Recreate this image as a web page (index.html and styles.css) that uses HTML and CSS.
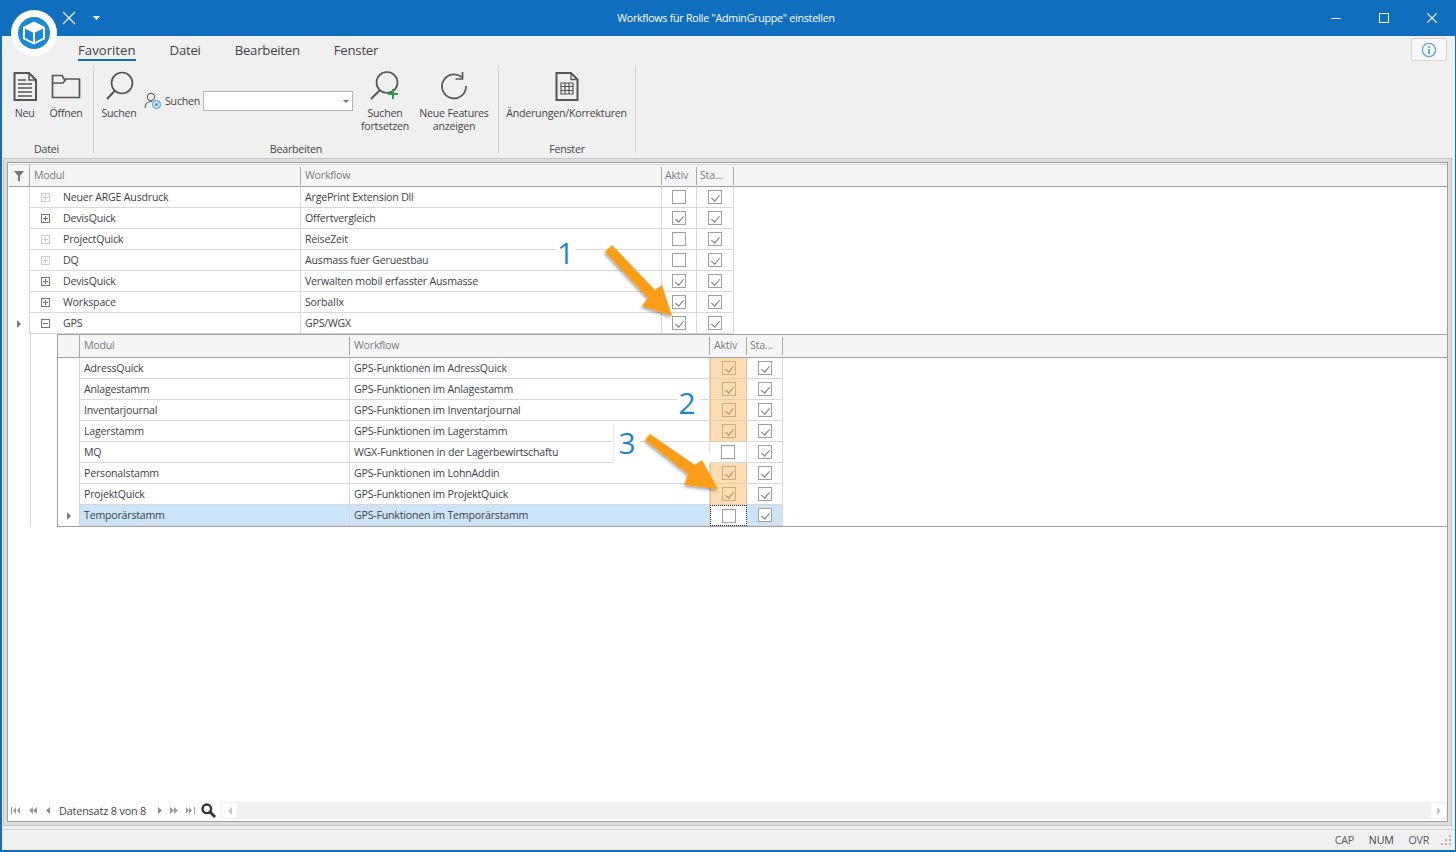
FILE: index.html
```html
<!DOCTYPE html>
<html lang="de">
<head>
    <meta charset="UTF-8">
    <title>Workflows für Rolle "AdminGruppe" einstellen</title>
    <link rel="stylesheet" href="styles.css">
</head>
<body>
<div class="window">
    <div class="titlebar">
        <div class="quick">
            <svg width="14" height="14" viewBox="0 0 14 14"><path d="M1 1L13 13M13 1L1 13" stroke="#fff" stroke-width="1.1" fill="none"/></svg>
            <svg class="quick-caret" width="7" height="4" viewBox="0 0 7 4"><path d="M0 0H7L3.5 4Z" fill="#fff"/></svg>
        </div>
        <div class="title">Workflows für Rolle "AdminGruppe" einstellen</div>
        <div class="win-buttons">
            <svg width="10" height="10" viewBox="0 0 10 10"><path d="M0 5.5H10" stroke="#fff" stroke-width="1"/></svg>
            <svg width="10" height="10" viewBox="0 0 10 10"><rect x=".5" y=".5" width="9" height="9" fill="none" stroke="#fff"/></svg>
            <svg width="10" height="10" viewBox="0 0 10 10"><path d="M0 0L10 10M10 0L0 10" stroke="#fff" stroke-width="1.1"/></svg>
        </div>
    </div>

    <div class="logo">
        <svg width="34" height="34" viewBox="0 0 34 34">
            <circle cx="17" cy="17" r="16" fill="#1c87d4"/>
            <path d="M17 5.5L28 11V23L17 28.5L6 23V11Z" fill="#fff"/>
            <path d="M8 12.8L16 16.6V26L8 22Z" fill="#1c87d4"/>
            <path d="M26 12.8L18 16.6V26L26 22Z" fill="#1c87d4"/>
        </svg>
    </div>

    <div class="tabs">
        <span class="tab active">Favoriten</span>
        <span class="tab">Datei</span>
        <span class="tab">Bearbeiten</span>
        <span class="tab">Fenster</span>
        <div class="info-btn">
            <svg width="16" height="16" viewBox="0 0 16 16"><circle cx="8" cy="8" r="6.6" fill="none" stroke="#5aa9e0" stroke-width="1.3"/><path d="M8 4.2V5.8M8 7V12" stroke="#2f8fd6" stroke-width="1.5"/></svg>
        </div>
    </div>

    <div class="ribbon">
        <div class="group group-datei">
            <div class="group-items">
                <div class="rb-btn btn-neu">
                    <svg width="26" height="32" viewBox="0 0 26 32"><path d="M2.5 4H17L24 11V31H2.5Z" fill="none" stroke="#555" stroke-width="2"/><path d="M17 4V11H24" fill="none" stroke="#555" stroke-width="1.5"/><path d="M6 11H14M6 15H20M6 19H20M6 23H20M6 27H20" stroke="#555" stroke-width="1.5"/></svg>
                    <span>Neu</span>
                </div>
                <div class="rb-btn btn-open">
                    <svg width="30" height="32" viewBox="0 0 30 32"><path d="M1.5 7.5V28.5H28.5V10H13L11 6.5H1.5Z M1.5 14H12L15 10" fill="none" stroke="#555" stroke-width="1.7"/></svg>
                    <span>Öffnen</span>
                </div>
            </div>
            <div class="group-label">Datei</div>
        </div>

        <div class="group group-edit">
            <div class="group-items">
                <div class="rb-btn btn-search">
                    <svg width="32" height="32" viewBox="0 0 32 32"><circle cx="19" cy="14" r="10.5" fill="none" stroke="#555" stroke-width="1.7"/><path d="M11.5 22L4 30" stroke="#555" stroke-width="2"/></svg>
                    <span>Suchen</span>
                </div>
                <div class="search-field">
                    <svg width="18" height="18" viewBox="0 0 18 18"><circle cx="7" cy="5" r="3.6" fill="none" stroke="#666" stroke-width="1.1"/><path d="M1 16C1 11 4 9.5 8 9.5" fill="none" stroke="#666" stroke-width="1.1"/><circle cx="12.5" cy="12.5" r="4" fill="#cfe6f7" stroke="#3d97d8"/><circle cx="12.5" cy="12.5" r="1.5" fill="#2f8fd6"/></svg>
                    <span class="search-label">Suchen</span>
                    <div class="combo"><i class="combo-caret"></i></div>
                </div>
                <div class="rb-btn btn-next">
                    <svg width="32" height="32" viewBox="0 0 32 32"><circle cx="18" cy="13.5" r="10.5" fill="none" stroke="#555" stroke-width="1.7"/><path d="M10.5 21.5L2 30" stroke="#555" stroke-width="2"/><path d="M24 20V30M19 25H29" stroke="#2f9e4f" stroke-width="2"/></svg>
                    <span>Suchen<br>fortsetzen</span>
                </div>
                <div class="rb-btn btn-new">
                    <svg width="28" height="32" viewBox="0 0 28 32"><path d="M21.5 8A12 12 0 1 0 26 17" fill="none" stroke="#555" stroke-width="1.7"/><path d="M22.5 3V10H15.5" fill="none" stroke="#555" stroke-width="1.7"/></svg>
                    <span>Neue Features<br>anzeigen</span>
                </div>
            </div>
            <div class="group-label">Bearbeiten</div>
        </div>

        <div class="group group-window">
            <div class="group-items">
                <div class="rb-btn btn-changes">
                    <svg width="24" height="32" viewBox="0 0 24 32"><path d="M1.5 4H16L22.5 10.5V31H1.5Z" fill="none" stroke="#555" stroke-width="2"/><path d="M16 4V10.5H22.5" fill="none" stroke="#555" stroke-width="1.3"/><path d="M6 14H18V25H6Z M6 17.5H18M6 21.5H18M10 14V25M14 14V25" fill="none" stroke="#555" stroke-width="1.2"/></svg>
                    <span>Änderungen/Korrekturen</span>
                </div>
            </div>
            <div class="group-label">Fenster</div>
        </div>
    </div>

    <div class="frame">
        <div class="frame-inner">
            <div class="grid">
                <div class="row head main-cols">
                    <div class="cell ind"><svg width="10" height="10" viewBox="0 0 10 10"><path d="M0 0H10L6 5V10H4V5Z" fill="#777"/></svg></div>
                    <div class="cell">Modul</div><div class="cell">Workflow</div><div class="cell narrow">Aktiv</div><div class="cell narrow">Sta...</div>
                </div>
                <div class="row main-cols">
                    <div class="ind"></div><div class="cell modul"><i class="exp off"></i>Neuer ARGE Ausdruck</div><div class="cell">ArgePrint Extension Dll</div><div class="cell box"><i class="check"></i></div><div class="cell box"><i class="check on"></i></div>
                </div>
                <div class="row main-cols">
                    <div class="ind"></div><div class="cell modul"><i class="exp"></i>DevisQuick</div><div class="cell">Offertvergleich</div><div class="cell box"><i class="check on"></i></div><div class="cell box"><i class="check on"></i></div>
                </div>
                <div class="row main-cols">
                    <div class="ind"></div><div class="cell modul"><i class="exp off"></i>ProjectQuick</div><div class="cell">ReiseZeit</div><div class="cell box"><i class="check"></i></div><div class="cell box"><i class="check on"></i></div>
                </div>
                <div class="row main-cols">
                    <div class="ind"></div><div class="cell modul"><i class="exp off"></i>DQ</div><div class="cell">Ausmass fuer Geruestbau</div><div class="cell box"><i class="check"></i></div><div class="cell box"><i class="check on"></i></div>
                </div>
                <div class="row main-cols">
                    <div class="ind"></div><div class="cell modul"><i class="exp"></i>DevisQuick</div><div class="cell">Verwalten mobil erfasster Ausmasse</div><div class="cell box"><i class="check on"></i></div><div class="cell box"><i class="check on"></i></div>
                </div>
                <div class="row main-cols">
                    <div class="ind"></div><div class="cell modul"><i class="exp"></i>Workspace</div><div class="cell">SorbaIIx</div><div class="cell box"><i class="check on"></i></div><div class="cell box"><i class="check on"></i></div>
                </div>
                <div class="row main-cols">
                    <div class="ind"><i class="cur"></i></div><div class="cell modul"><i class="exp open"></i>GPS</div><div class="cell">GPS/WGX</div><div class="cell box"><i class="check on"></i></div><div class="cell box"><i class="check on"></i></div>
                </div>

                <div class="detail-wrap">
                    <div class="detail">
                        <div class="row head sub-cols">
                            <div class="cell ind"></div><div class="cell">Modul</div><div class="cell">Workflow</div><div class="cell">Aktiv</div><div class="cell narrow">Sta...</div>
                        </div>
                        <div class="row sub-cols">
                            <div class="ind"></div><div class="cell">AdressQuick</div><div class="cell">GPS-Funktionen im AdressQuick</div><div class="cell box hl"><i class="check on"></i></div><div class="cell box"><i class="check on"></i></div>
                        </div>
                        <div class="row sub-cols">
                            <div class="ind"></div><div class="cell">Anlagestamm</div><div class="cell">GPS-Funktionen im Anlagestamm</div><div class="cell box hl"><i class="check on"></i></div><div class="cell box"><i class="check on"></i></div>
                        </div>
                        <div class="row sub-cols">
                            <div class="ind"></div><div class="cell">Inventarjournal</div><div class="cell">GPS-Funktionen im Inventarjournal</div><div class="cell box hl"><i class="check on"></i></div><div class="cell box"><i class="check on"></i></div>
                        </div>
                        <div class="row sub-cols">
                            <div class="ind"></div><div class="cell">Lagerstamm</div><div class="cell">GPS-Funktionen im Lagerstamm</div><div class="cell box hl"><i class="check on"></i></div><div class="cell box"><i class="check on"></i></div>
                        </div>
                        <div class="row sub-cols">
                            <div class="ind"></div><div class="cell">MQ</div><div class="cell">WGX-Funktionen in der Lagerbewirtschaftu</div><div class="cell box"><i class="check"></i></div><div class="cell box"><i class="check on"></i></div>
                        </div>
                        <div class="row sub-cols">
                            <div class="ind"></div><div class="cell">Personalstamm</div><div class="cell">GPS-Funktionen im LohnAddin</div><div class="cell box hl"><i class="check on"></i></div><div class="cell box"><i class="check on"></i></div>
                        </div>
                        <div class="row sub-cols">
                            <div class="ind"></div><div class="cell">ProjektQuick</div><div class="cell">GPS-Funktionen im ProjektQuick</div><div class="cell box hl"><i class="check on"></i></div><div class="cell box"><i class="check on"></i></div>
                        </div>
                        <div class="row sub-cols selected">
                            <div class="ind"><i class="cur"></i></div><div class="cell">Temporärstamm</div><div class="cell">GPS-Funktionen im Temporärstamm</div><div class="cell box focus"><i class="check"></i></div><div class="cell box"><i class="check on"></i></div>
                        </div>
                    </div>
                </div>
            </div>

            <div class="pager">
                <div class="nav-btns">
                    <svg width="9" height="7" viewBox="0 0 9 7"><path d="M0 0H1V7H0ZM5 0V7L2 3.5ZM9 0V7L6 3.5Z" fill="#9a9a9a"/></svg>
                    <svg width="8" height="7" viewBox="0 0 8 7"><path d="M4 0V7L0 3.5ZM8 0V7L4 3.5Z" fill="#9a9a9a"/></svg>
                    <svg width="4" height="7" viewBox="0 0 4 7"><path d="M4 0V7L0 3.5Z" fill="#8a8a8a"/></svg>
                </div>
                <span class="record">Datensatz 8 von 8</span>
                <div class="nav-btns nav-right">
                    <svg width="4" height="7" viewBox="0 0 4 7"><path d="M0 0V7L4 3.5Z" fill="#8a8a8a"/></svg>
                    <svg width="8" height="7" viewBox="0 0 8 7"><path d="M0 0V7L4 3.5ZM4 0V7L8 3.5Z" fill="#9a9a9a"/></svg>
                    <svg width="9" height="7" viewBox="0 0 9 7"><path d="M0 0V7L3 3.5ZM3 0V7L6 3.5ZM8 0H9V7H8Z" fill="#9a9a9a"/></svg>
                </div>
                <svg class="pager-search" width="15" height="15" viewBox="0 0 15 15"><circle cx="5.8" cy="5.8" r="4.3" fill="none" stroke="#333" stroke-width="2.4"/><path d="M9 9L14 14" stroke="#333" stroke-width="2.8"/></svg>
                <div class="hscroll">
                    <div class="sb-btn"><i class="sb-left"></i></div>
                    <div class="sb-btn"><i class="sb-right"></i></div>
                </div>
            </div>
        </div>
    </div>

    <div class="statusbar">
        <span class="st-cap">CAP</span><span class="st-num">NUM</span><span class="st-ovr">OVR</span>
        <svg width="10" height="10" viewBox="0 0 10 10"><path d="M8 0h2v2H8zM4 4h2v2H4zM8 4h2v2H8zM0 8h2v2H0zM4 8h2v2H4zM8 8h2v2H8z" fill="#b4b4b4"/></svg>
    </div>

    <div class="mark mark-1">1</div>
    <div class="mark mark-2">2</div>
    <div class="mark mark-3">3</div>
    <svg class="arrows" width="1456" height="852" viewBox="0 0 1456 852">
        <defs><filter id="sh" x="-20%" y="-20%" width="140%" height="140%"><feDropShadow dx="-1" dy="2" stdDeviation="1.6" flood-color="#000" flood-opacity=".35"/></filter></defs>
        <path d="M605 252L612 245L655 290L662 285L672 316L642 306L648 298Z" fill="#fb9d17" filter="url(#sh)"/>
        <path d="M645 440L650 434L695 465L702 460L718 489L685 485L688 474Z" fill="#fb9d17" filter="url(#sh)"/>
    </svg>
</div>
</body>
</html>
```

FILE: styles.css
```css
* {
    box-sizing: border-box;
}

body {
    margin: 0;
    font-family: "Open Sans", "Liberation Sans", sans-serif;
    font-size: 10.6px;
    letter-spacing: -0.2px;
    color: #3c3f4a;
    background: #f0f0f0;
}

.window {
    position: relative;
    display: flex;
    flex-direction: column;
    height: 852px;
    overflow: hidden;
    border-left: 2px solid #106ebe;
    border-right: 1px solid #106ebe;
    border-bottom: 2px solid #106ebe;
}

/* title bar */
.titlebar {
    display: flex;
    align-items: center;
    flex: none;
    height: 36px;
    margin: 0 -1px 0 -2px;
    background: #106ebe;
    color: #fff;
}

.quick {
    display: flex;
    align-items: center;
    width: 440px;
    padding-left: 62px;
}

.quick-caret {
    margin-left: 17px;
}

.title {
    width: 572px;
    text-align: center;
    letter-spacing: -0.22px;
}

.win-buttons {
    display: flex;
    align-items: center;
    gap: 38px;
    margin-left: auto;
    padding-right: 19px;
}

.logo {
    position: absolute;
    left: 9px;
    top: 10px;
    width: 46px;
    height: 46px;
    display: flex;
    align-items: center;
    justify-content: center;
    border-radius: 50%;
    background: #fff;
}

/* tabs */
.tabs {
    display: flex;
    align-items: flex-start;
    flex: none;
    height: 28px;
    padding-left: 76px;
    gap: 34px;
}

.tab {
    height: 25px;
    padding-top: 4px;
    font-size: 13.2px;
    letter-spacing: -0.25px;
    line-height: 20px;
    color: #444;
}

.tab.active {
    letter-spacing: 0;
    border-bottom: 2px solid #106ebe;
}

.info-btn {
    display: flex;
    align-items: center;
    justify-content: center;
    width: 36px;
    height: 23px;
    margin: 2px 8px 0 auto;
    background: #f8f8f8;
    border: 1px solid #d4d4d4;
    border-radius: 2px;
}

/* ribbon */
.ribbon {
    display: flex;
    flex: none;
    height: 91px;
    padding-top: 2px;
}

.group {
    display: flex;
    flex-direction: column;
    height: 87px;
    border-right: 1px solid #d0d0d0;
}

.group-datei {
    width: 92px;
    padding: 0 6px 0 4px;
}

.group-edit {
    width: 405px;
}

.group-window {
    width: 137px;
}

.group-items {
    display: flex;
    flex: 1;
}

.group-label {
    height: 14px;
    margin-bottom: -3px;
    text-align: center;
    line-height: 14px;
    color: #444;
}

.rb-btn {
    display: flex;
    flex-direction: column;
    align-items: center;
    text-align: center;
    line-height: 13px;
    color: #444;
    white-space: nowrap;
}

.rb-btn svg {
    height: 32px;
    margin-top: 3px;
    margin-bottom: 6px;
}

.btn-neu {
    width: 39px;
}

.btn-open {
    width: 44px;
    margin-left: 2px;
}

.btn-search {
    width: 50px;
}

.btn-next {
    width: 54px;
    margin-left: 1px;
}

.btn-new {
    width: 74px;
    margin-left: 5px;
}

.btn-changes {
    width: 135px;
}

.search-field {
    display: flex;
    align-items: center;
    align-self: flex-start;
    width: 213px;
    margin-top: 25px;
    height: 20px;
    color: #444;
}

.search-label {
    margin: 0 3px 0 3px;
}

.combo {
    position: relative;
    width: 150px;
    height: 20px;
    background: #fff;
    border: 1px solid #b4b4b4;
}

.combo-caret {
    position: absolute;
    right: 3px;
    top: 8px;
    border-top: 3px solid #777;
    border-left: 3px solid transparent;
    border-right: 3px solid transparent;
}

/* grid frame */
.frame {
    flex: 1;
    margin: 3px 3px 3px 1px;
    padding: 3px;
    background: #dedede;
    border: 1px solid #c4c4c4;
}

.frame-inner {
    display: flex;
    flex-direction: column;
    height: 100%;
    padding: 1px 0 1px 1px;
    background: #fff;
    border: 1px solid #a0a0a0;
}

.grid {
    flex: 1;
}

.row {
    display: grid;
    height: 21px;
}

.main-cols {
    grid-template-columns: 21px 271px 361px 35px 37px;
}

.sub-cols {
    grid-template-columns: 22px 270px 360px 37px 36px;
}

.cell {
    padding-left: 4px;
    line-height: 20px;
    white-space: nowrap;
    overflow: hidden;
    border-right: 1px solid #d8d8d8;
    border-bottom: 1px solid #d8d8d8;
}

.ind {
    display: flex;
    align-items: center;
    justify-content: center;
    border-right: 1px solid #d8d8d8;
}

.head {
    height: 23px;
    grid-template-rows: 22px;
    background: #f5f5f5;
    border-bottom: 1px solid #a0a0a0;
    color: #777b85;
    border-top: 1px solid #d8d8d8;
}

.head .cell {
    border: 0;
    border-right: 1px solid #a8a8a8;
    margin: 2px 0;
    line-height: 17px;
    padding-left: 4px;
}

.head .cell.narrow {
    padding-left: 3px;
}

.head .cell:first-child {
    margin: 0;
    padding: 0;
    display: flex;
    align-items: center;
    justify-content: center;
}

.modul {
    display: flex;
    align-items: center;
    padding-left: 11px;
}

.exp {
    position: relative;
    flex: none;
    width: 9px;
    height: 9px;
    margin-right: 13px;
    border: 1px solid #777;
}

.exp::before,
.exp:not(.open)::after {
    content: "";
    position: absolute;
    background: #777;
}

.exp::before {
    left: 1px;
    top: 3px;
    width: 5px;
    height: 1px;
}

.exp:not(.open)::after {
    left: 3px;
    top: 1px;
    width: 1px;
    height: 5px;
}

.exp.off {
    border-color: #ccc;
}

.exp.off::before,
.exp.off::after {
    background: #ccc !important;
}

.cur {
    border-left: 4px solid #7a7a7a;
    border-top: 4px solid transparent;
    border-bottom: 4px solid transparent;
}

.box {
    display: flex;
    align-items: center;
    justify-content: center;
    padding: 0;
}

.check {
    position: relative;
    width: 14px;
    height: 14px;
    border: 1px solid #a0a0a0;
    background: #fff;
}

.check.on::after {
    content: "";
    position: absolute;
    left: 4px;
    top: 2px;
    width: 4px;
    height: 7px;
    border-right: 1px solid #777;
    border-bottom: 1px solid #777;
    transform: rotate(40deg);
}

.hl {
    background: #fcdcb0;
    border-left: 1px solid #edc48f;
    border-right: 1px solid #edc48f;
    border-bottom-color: #e6cfae;
}

.hl .check {
    background: #fcdcb0;
    border-color: #d0ab7d;
}

.hl .check.on::after {
    border-color: #b08a60;
}

.focus {
    border: 1px dotted #222;
}

.selected .cell,
.selected .ind {
    background: #cce4f7;
}

.selected .ind {
    background: #fff;
}

.selected .focus {
    background: #fff;
}

.detail-wrap {
    margin-left: 21px;
    padding-left: 26px;
    border-left: 1px solid #d8d8d8;
}

.detail {
    border-left: 1px solid #a0a0a0;
    border-top: 1px solid #a0a0a0;
    border-bottom: 1px solid #a0a0a0;
}

.detail .head {
    border-top: 0;
}

/* pager */
.pager {
    display: flex;
    align-items: center;
    flex: none;
    height: 19px;
    padding-left: 2px;
}

.nav-btns {
    display: flex;
    align-items: center;
    gap: 9px;
}

.record {
    margin: 0 12px 0 9px;
    font-size: 10.8px;
    letter-spacing: -0.15px;
}

.nav-right {
    gap: 8px;
}

.pager-search {
    margin: 0 3px 0 6px;
}

.hscroll {
    display: flex;
    justify-content: space-between;
    flex: 1;
    height: 17px;
    padding: 1px;
    margin-left: 2px;
    background: #f1f1f1;
}

.sb-btn {
    display: flex;
    align-items: center;
    justify-content: center;
    width: 15px;
    background: #fff;
}

.sb-left {
    border-right: 4px solid #c4c4c4;
    border-top: 4px solid transparent;
    border-bottom: 4px solid transparent;
}

.sb-right {
    border-left: 4px solid #c4c4c4;
    border-top: 4px solid transparent;
    border-bottom: 4px solid transparent;
}

/* status bar */
.statusbar {
    display: flex;
    align-items: center;
    flex: none;
    height: 21px;
    padding-right: 4px;
    justify-content: flex-end;
    color: #555a66;
    border-top: 1px solid #d4d4d4;
}

.st-num {
    margin: 0 15px;
    color: #3c3f4a;
}

.st-ovr {
    margin-right: 12px;
}

/* annotations drawn on top of the screenshot */
.arrows {
    position: absolute;
    left: -2px;
    top: 0;
    pointer-events: none;
}

.mark {
    position: absolute;
    display: flex;
    align-items: center;
    justify-content: center;
    background: #fff;
    color: #1c86d0;
    font-size: 30px;
    letter-spacing: 0;
}

.mark-1 {
    left: 554px;
    top: 236px;
    width: 19px;
    height: 33px;
}

.mark-2 {
    left: 675px;
    top: 385px;
    width: 23px;
    height: 34px;
    padding-right: 3px;
}

.mark-3 {
    left: 612px;
    top: 422px;
    width: 26px;
    height: 41px;
    box-shadow: -1px 0 0 #ececec;
}

.mark-3::after {
    content: "";
    position: absolute;
    left: 100%;
    top: 30px;
    width: 70px;
    height: 12px;
    background: #fff;
}
```
